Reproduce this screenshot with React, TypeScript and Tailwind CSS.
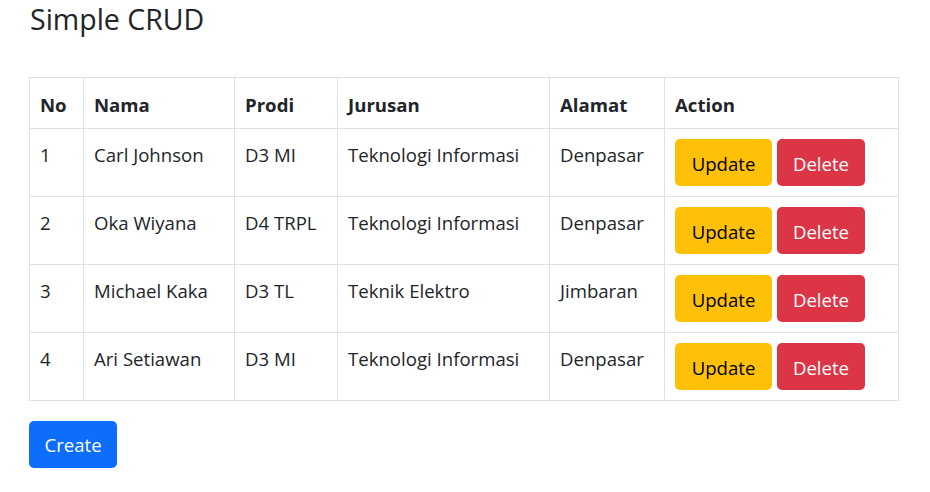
const ROWS = [
  { no: 1, nama: "Carl Johnson", prodi: "D3 MI", jurusan: "Teknologi Informasi", alamat: "Denpasar" },
  { no: 2, nama: "Oka Wiyana", prodi: "D4 TRPL", jurusan: "Teknologi Informasi", alamat: "Denpasar" },
  { no: 3, nama: "Michael Kaka", prodi: "D3 TL", jurusan: "Teknik Elektro", alamat: "Jimbaran" },
  { no: 4, nama: "Ari Setiawan", prodi: "D3 MI", jurusan: "Teknologi Informasi", alamat: "Denpasar" },
];

const HEADS = ["No", "Nama", "Prodi", "Jurusan", "Alamat", "Action"];

export default function App() {
  return (
    <div
      className="min-h-screen bg-white px-[29px] text-[#212529]"
      style={{ fontFamily: "'Open Sans', 'Noto Sans', sans-serif" }}
    >
      <h3 className="mb-[39px] pl-px text-[28.5px] font-medium leading-[38px]">Simple CRUD</h3>

      <table className="w-[869px] table-fixed border-collapse text-[18.6px] leading-[30px]">
        <colgroup>
          <col className="w-[54px]" />
          <col className="w-[151px]" />
          <col className="w-[103px]" />
          <col className="w-[212px]" />
          <col className="w-[115px]" />
          <col className="w-[234px]" />
        </colgroup>
        <thead>
          <tr className="h-[51px]">
            {HEADS.map((h) => (
              <th key={h} className="border border-[#dee2e6] px-[10px] pt-[12px] pb-[8px] text-left align-middle font-bold">
                {h}
              </th>
            ))}
          </tr>
        </thead>
        <tbody>
          {ROWS.map((r) => (
            <tr key={r.no} className="h-[68px]">
              <td className="border border-[#dee2e6] px-[10px] pt-[11px] align-top">{r.no}</td>
              <td className="border border-[#dee2e6] px-[10px] pt-[11px] align-top">{r.nama}</td>
              <td className="border border-[#dee2e6] px-[10px] pt-[11px] align-top">{r.prodi}</td>
              <td className="border border-[#dee2e6] px-[10px] pt-[11px] align-top">{r.jurusan}</td>
              <td className="border border-[#dee2e6] px-[10px] pt-[11px] align-top">{r.alamat}</td>
              <td className="border border-[#dee2e6] px-[10px] pt-[10px] pb-[10px] align-top">
                <div className="flex gap-[5px]">
                  <button className="h-[47px] w-[97px] rounded-[5px] bg-[#ffc107] pt-[2px] text-[18.6px] text-black">Update</button>
                  <button className="h-[47px] w-[88px] rounded-[5px] bg-[#dc3545] pt-[2px] text-[18.6px] text-white">Delete</button>
                </div>
              </td>
            </tr>
          ))}
        </tbody>
      </table>

      <button className="mt-[20px] h-[47px] w-[88px] rounded-[5px] bg-[#0d6efd] text-[18.6px] text-white">Create</button>
    </div>
  );
}
